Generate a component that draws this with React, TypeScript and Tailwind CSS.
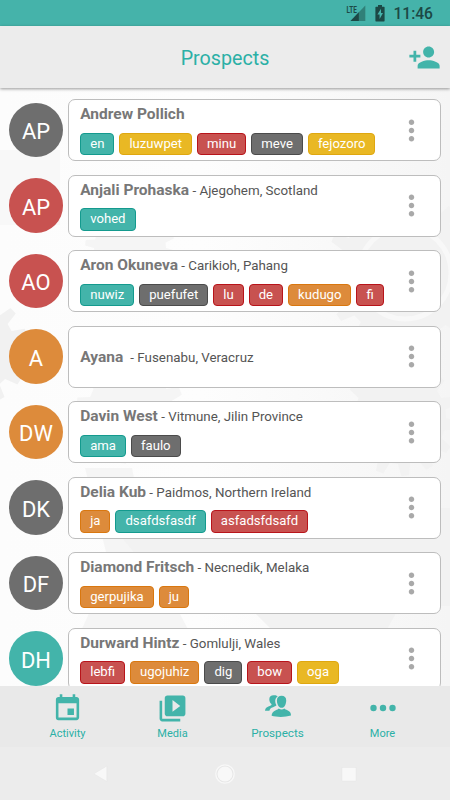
import type { ReactNode } from 'react';
import { MdEvent, MdMoreVert, MdPersonAdd, MdVideoLibrary } from 'react-icons/md';

type Tone = 'teal' | 'yellow' | 'red' | 'gray' | 'orange';

interface Prospect {
  initials: string;
  name: string;
  location?: string;
  tone: Tone;
  tags: [string, Tone][];
}

const AVATAR: Record<Tone, string> = {
  teal: 'bg-[#43b4aa]',
  yellow: 'bg-[#e9b824]',
  red: 'bg-[#c85250]',
  gray: 'bg-[#6e6e6e]',
  orange: 'bg-[#dd8b3b]',
};

const TAG: Record<Tone, string> = {
  teal: 'bg-[#43b4aa] border-[#149a8e]',
  yellow: 'bg-[#e9b824] border-[#dfa710]',
  red: 'bg-[#c85250] border-[#b8141a]',
  gray: 'bg-[#6e6e6e] border-[#4b4b4b]',
  orange: 'bg-[#dd8b3b] border-[#d9770f]',
};

const PROSPECTS: Prospect[] = [
  {
    initials: 'AP', name: 'Andrew Pollich', tone: 'gray',
    tags: [['en', 'teal'], ['luzuwpet', 'yellow'], ['minu', 'red'], ['meve', 'gray'], ['fejozoro', 'yellow']],
  },
  { initials: 'AP', name: 'Anjali Prohaska', location: 'Ajegohem, Scotland', tone: 'red', tags: [['vohed', 'teal']] },
  {
    initials: 'AO', name: 'Aron Okuneva', location: 'Carikioh, Pahang', tone: 'red',
    tags: [['nuwiz', 'teal'], ['puefufet', 'gray'], ['lu', 'red'], ['de', 'red'], ['kudugo', 'orange'], ['fi', 'red']],
  },
  { initials: 'A', name: 'Ayana ', location: 'Fusenabu, Veracruz', tone: 'orange', tags: [] },
  {
    initials: 'DW', name: 'Davin West', location: 'Vitmune, Jilin Province', tone: 'orange',
    tags: [['ama', 'teal'], ['faulo', 'gray']],
  },
  {
    initials: 'DK', name: 'Delia Kub', location: 'Paidmos, Northern Ireland', tone: 'gray',
    tags: [['ja', 'orange'], ['dsafdsfasdf', 'teal'], ['asfadsfdsafd', 'red']],
  },
  {
    initials: 'DF', name: 'Diamond Fritsch', location: 'Necnedik, Melaka', tone: 'gray',
    tags: [['gerpujika', 'orange'], ['ju', 'orange']],
  },
  {
    initials: 'DH', name: 'Durward Hintz', location: 'Gomlulji, Wales', tone: 'teal',
    tags: [['lebfi', 'red'], ['ugojuhiz', 'orange'], ['dig', 'gray'], ['bow', 'red'], ['oga', 'yellow']],
  },
];

// Outline of a cog: each tooth is a trapezoid between the inner and outer radius
function gear(cx: number, cy: number, inner: number, outer: number, teeth: number) {
  const step = (Math.PI * 2) / teeth;
  const points: string[] = [];
  for (let i = 0; i < teeth; i++) {
    const spots = [[0, inner], [0.15, outer], [0.45, outer], [0.6, inner]];
    spots.forEach(([t, r]) => {
      const a = (i + t) * step;
      points.push(`${(cx + r * Math.cos(a)).toFixed(1)} ${(cy + r * Math.sin(a)).toFixed(1)}`);
    });
  }
  return `M${points.join('L')}Z`;
}

function GearBackdrop() {
  return (
    <svg viewBox="0 0 450 598" className="absolute inset-0 h-full w-full" aria-hidden="true">
      <defs>
        <linearGradient id="fade" x1="0" x2="1">
          <stop offset="0" stopColor="#fcfcfc" />
          <stop offset="0.45" stopColor="#fdfdfd" />
          <stop offset="1" stopColor="#f5f5f5" />
        </linearGradient>
      </defs>
      <rect width="450" height="598" fill="url(#fade)" />
      <path d="M0 62H60V137H0Z" fill="#f8f8f8" />
      <path d={gear(-28, 262, 44, 57, 14)} fill="#f1f1f1" />
      <path d={gear(130, 160, 36, 45, 16)} fill="#f5f5f5" />
      <path d={gear(130, 322, 42, 54, 12)} fill="#f5f5f5" />
      <path d={gear(405, 185, 66, 80, 18)} fill="#f2f2f2" />
      <circle cx="405" cy="185" r="46" fill="none" stroke="#f8f8f8" strokeWidth="5" />
      <path d={gear(400, 330, 46, 58, 14)} fill="#f2f2f2" />
      <path d="M85 380H132L150 470L190 545H80L110 480Z" fill="#f5f5f5" />
      <path d="M122 450H395V420H450V518H400L385 545H275L250 520H180Z" fill="#f2f2f2" />
    </svg>
  );
}

function StatusBar() {
  return (
    <div className="flex h-[26px] shrink-0 items-center justify-end bg-[#45b3aa] pr-[17px] text-[#1c4845]">
      <svg width="20" height="18" viewBox="0 0 20 18">
        <path d="M19.3 1.6V16.9H4.5Z" fill="#308078" />
        <path d="M12.8 8.2V16.9H4.5Z" fill="#1c4845" />
        <path d="M0 1H12V9H0Z" fill="#45b3aa" />
        <text x="0.6" y="8.6" textLength="10.3" lengthAdjust="spacingAndGlyphs" fontSize="9.6" fontWeight="700" fill="#1c4845">LTE</text>
      </svg>
      <svg width="10" height="17" viewBox="0 0 10 17" className="ml-[9px]">
        <path d="M3 0H7V1.8H9Q9.6 1.8 9.6 2.5V15.7Q9.6 16.4 9 16.4H1Q.4 16.4 .4 15.7V2.5Q.4 1.8 1 1.8H3Z" fill="#1c4845" />
        <path d="M6 3.7L2.4 9.6H4.6V14L8 8H6Z" fill="#45b3aa" />
      </svg>
      <span className="ml-[8px] pt-[4px] text-[15.6px] leading-none font-medium">11:46</span>
    </div>
  );
}

function Header() {
  return (
    <header className="z-10 flex h-[62px] shrink-0 items-center bg-[#ececec] pr-[9.5px] shadow-[0_1px_3px_rgba(0,0,0,0.4)]">
      <div className="w-[43.5px]" />
      <h1 className="flex-1 pt-[3px] text-center text-[19.7px] text-[#2bb0a6]">Prospects</h1>
      <button className="flex w-[34px] justify-end text-[#43b4aa]" aria-label="Add prospect">
        <MdPersonAdd size={33} />
      </button>
    </header>
  );
}

function ProspectRow({ prospect }: { prospect: Prospect }) {
  const { initials, name, location, tone, tags } = prospect;

  return (
    <div className="flex h-[62px] shrink-0 items-center gap-[5px]">
      <div className={`flex size-[54.5px] shrink-0 items-center justify-center rounded-full pt-[4px] text-[21.9px] leading-none text-white ${AVATAR[tone]}`}>
        {initials}
      </div>
      <div className="flex h-full flex-1 items-center rounded-[7px] border border-[#bdbdbd] bg-white pr-[11.8px] pl-[11px]">
        <div className={`flex h-full flex-1 flex-col ${tags.length ? 'pt-[5px]' : 'justify-center pt-px'}`}>
          <p className="text-[13.35px] leading-[18px] whitespace-pre text-[#555]">
            <span className="text-[15.5px] font-bold text-[#777]">{name}</span>
            {location && ` - ${location}`}
          </p>
          {tags.length > 0 && (
            <div className="mt-[8.7px] flex gap-[5px]">
              {tags.map(([label, color]) => (
                <span key={label} className={`h-[22.5px] rounded-[4px] border px-[9px] text-[13.13px] leading-[20.5px] text-white ${TAG[color]}`}>
                  {label}
                </span>
              ))}
            </div>
          )}
        </div>
        <button className="shrink-0 text-[#a9a9a9]" aria-label="Options">
          <MdMoreVert size={33} />
        </button>
      </div>
    </div>
  );
}

function PeopleIcon() {
  return (
    <svg width="26" height="22" viewBox="0 0 26 22" fill="currentColor">
      <path d="M8.6 .2C11 0 12.2 .8 12.6 1.5C10.8 2.6 10 4.5 10.3 6.8C10.5 8.5 10.9 9.4 11.5 10.2C10.6 11.2 8.6 11.8 6.6 12.8C5.4 13.5 4.8 14.6 4.4 15.8H0C.2 13.6 1.3 12.4 3.4 11.6C5.4 10.9 6.6 10.5 6.6 9.3C5.2 8 4.3 6.4 4.3 4.2C4.3 1.6 6 .3 8.6 .2Z" />
      <path d="M16.6 .8C19.4 .8 21.2 2.4 21.2 5.4C21.2 8.8 19.6 12.8 16.6 12.8C13.6 12.8 11.9 8.8 11.9 5.4C11.9 2.4 13.8 .8 16.6 .8Z" />
      <path d="M6.6 20.8C6.7 18 8 16.3 10.8 15.2C12.2 14.6 13.2 14.3 13.7 13.5C15.6 14.8 17.6 14.8 19.4 13.5C20 14.3 21.1 14.6 22.4 15.2C25 16.3 26 18 26 20.5C20 22.3 12.2 22.3 6.6 20.8Z" />
    </svg>
  );
}

function NavItem({ icon, label, active }: { icon: ReactNode; label: string; active?: boolean }) {
  return (
    <button className="flex w-[105px] flex-col items-center text-[#43b4aa]">
      <span className="flex h-[41px] items-center justify-center pt-[3px]">{icon}</span>
      <span className={`text-[#2bb0a6] ${active ? 'text-[11.7px] leading-[12px]' : 'text-[11px] leading-[13px]'}`}>{label}</span>
    </button>
  );
}

function BottomNav() {
  return (
    <nav className="flex h-[61px] shrink-0 justify-center bg-[#e9e9e9]">
      <NavItem label="Activity" icon={<MdEvent size={31} />} />
      <NavItem label="Media" icon={<MdVideoLibrary size={31} />} />
      <NavItem label="Prospects" active icon={<span className="pb-[5px]"><PeopleIcon /></span>} />
      <NavItem
        label="More"
        icon={
          <svg width="26" height="8" viewBox="0 0 26 8" fill="currentColor">
            <circle cx="3.5" cy="4" r="3.2" />
            <circle cx="13" cy="4" r="3.2" />
            <circle cx="22.5" cy="4" r="3.2" />
          </svg>
        }
      />
    </nav>
  );
}

function SystemBar() {
  return (
    <div className="flex h-[53px] shrink-0 items-center justify-center gap-[104px] bg-[#ececec]">
      <svg width="20" height="20" viewBox="0 0 20 20">
        <path d="M15.8 2V17.5L2.8 9.8Z" fill="#f8f8f8" stroke="#e4e4e4" strokeWidth="0.5" />
      </svg>
      <svg width="20" height="20" viewBox="0 0 20 20">
        <circle cx="10" cy="10" r="9.2" fill="#e7e7e7" stroke="#f8f8f8" strokeWidth="1.3" />
        <circle cx="10" cy="10" r="7.5" fill="#f8f8f8" />
      </svg>
      <svg width="20" height="20" viewBox="0 0 20 20">
        <path d="M3 3.5H17V17H3Z" fill="#f8f8f8" stroke="#e4e4e4" strokeWidth="0.4" />
      </svg>
    </div>
  );
}

export default function App() {
  return (
    <div className="flex h-[800px] w-[450px] flex-col overflow-hidden bg-white font-['Roboto',sans-serif]">
      <StatusBar />
      <Header />
      <main className="relative min-h-0 flex-1 overflow-hidden">
        <GearBackdrop />
        <div className="relative flex flex-col gap-[13.5px] pt-[11px] pr-[9px] pl-[8.7px]">
          {PROSPECTS.map((p) => (
            <ProspectRow key={p.name} prospect={p} />
          ))}
        </div>
      </main>
      <BottomNav />
      <SystemBar />
    </div>
  );
}
